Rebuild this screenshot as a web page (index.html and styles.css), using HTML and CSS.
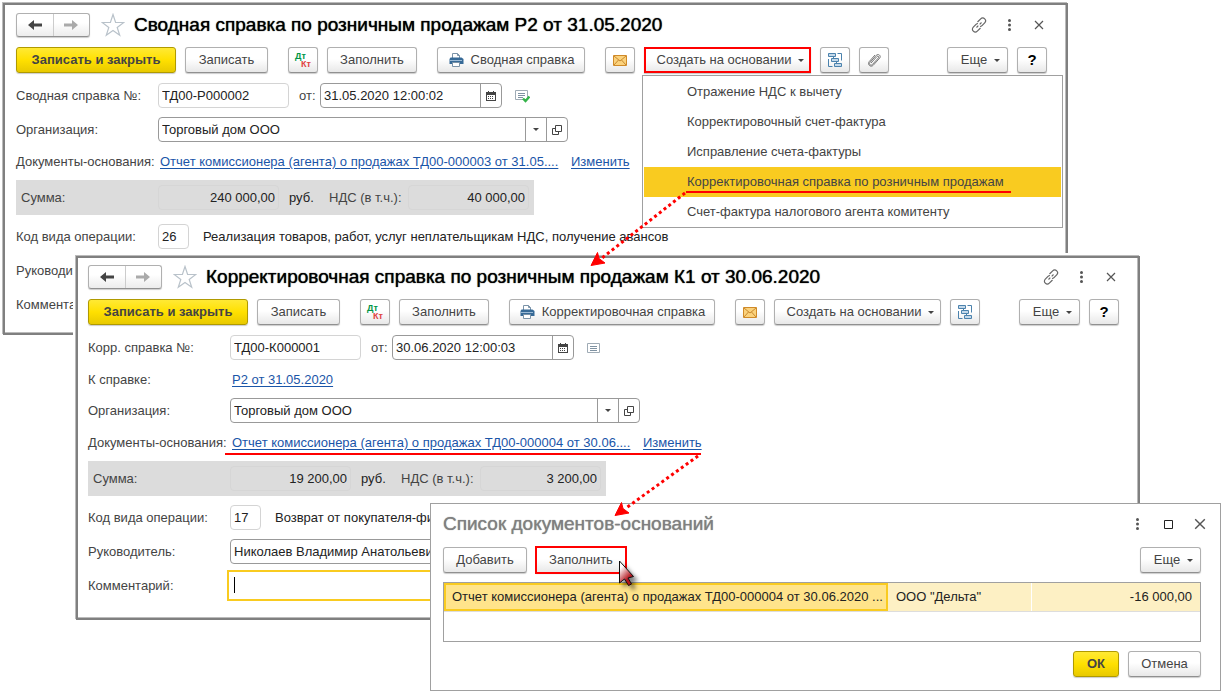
FILE: index.html
```html
<!DOCTYPE html>
<html lang="ru">
<head>
<meta charset="utf-8">
<meta name="viewport" content="width=device-width, initial-scale=1">
<title>Сводная справка по розничным продажам</title>
<link rel="stylesheet" href="styles.css">
</head>
<body>
<svg class="sprite" aria-hidden="true">
  <symbol id="i-back" viewBox="0 0 14 10"><path d="M6 0 0 5l6 5V6.500h8v-3H6z"/></symbol>
  <symbol id="i-forward" viewBox="0 0 14 10"><path d="M8 0l6 5-6 5V6.500H0v-3h8z"/></symbol>
  <symbol id="i-star" viewBox="0 0 24 24"><path d="M12 1.500l2.600 8h8.200l-6.600 4.900 2.500 7.800-6.700-4.800-6.700 4.800 2.500-7.800L1.200 9.500h8.200z" fill="#fff" stroke="#b9c2ca" stroke-width="1.200"/></symbol>
  <symbol id="i-link" viewBox="0 0 16 16"><g fill="none" stroke="#666" stroke-width="1.200"><path d="M6.500 5l3.200-3.200c1.200-1.200 2.800-1.200 4 0s1.200 2.800 0 4L11 8.600c-.6.600-1.300.9-2 .9"/><path d="M9.500 11l-3.200 3.200c-1.200 1.200-2.800 1.200-4 0s-1.200-2.800 0-4L5 7.400c.6-.6 1.300-.9 2-.9"/><path d="M5.500 10.500l1.800-1.800M8.700 7.300l1.800-1.800"/></g></symbol>
  <symbol id="i-dots" viewBox="0 0 3 12"><circle cx="1.500" cy="1.500" r="1.500"/><circle cx="1.500" cy="6" r="1.500"/><circle cx="1.500" cy="10.500" r="1.500"/></symbol>
  <symbol id="i-close" viewBox="0 0 10 10"><path d="M1 1l8 8M9 1l-8 8" fill="none" stroke="#555" stroke-width="1.200"/></symbol>
  <symbol id="i-print" viewBox="0 0 16 16"><path d="M4.500 6V1.500h5l2 2V6" fill="#fff" stroke="#7b93a8"/><path d="M9.500 1.500v2h2" fill="none" stroke="#7b93a8"/><path d="M2.500 5.500h11l2 1.500v5h-14V7z" fill="#376a97"/><path d="M2 8h12v1H2z" fill="#9dbbd6"/><path d="M4.500 10.500h7v4h-7z" fill="#fff" stroke="#7b93a8"/></symbol>
  <symbol id="i-mail" viewBox="0 0 14 11"><path d="M.5.5h13v10H.5z" fill="#fbd27c" stroke="#d08a28"/><path d="M1 1l6 5 6-5M1 10l4.500-5M13 10L8.500 5" fill="none" stroke="#c98a30"/></symbol>
  <symbol id="i-tree" viewBox="0 0 16 16"><g fill="#c4d9ea" stroke="#4b82ad"><path d="M1.500 1.500h7v3h-7zM4.500 6.500h7v3h-7zM7.500 11.500h7v3h-7z"/><path d="M10.500 1.500h4v7M1.500 7v7.500h4M6.500 4.500v2M9.500 9.500v2" fill="none"/></g></symbol>
  <symbol id="i-clip" viewBox="0 0 16 16"><path d="M5 11l6-6.500c1-1 2.400.2 1.500 1.300L6.300 12.600c-1.400 1.500-3.800-.3-2.500-2l6.400-7.200c2-2.200 5.300.3 3.500 2.700L7.200 13.300c-2.600 2.500-6.200-.8-4-3.700L9 3" fill="none" stroke="#777"/></symbol>
  <symbol id="i-calendar" viewBox="0 0 10 10"><path d="M0 1h10v9H0z" fill="#444"/><path d="M2 0h1v2H2zM7 0h1v2H7z" fill="#444"/><path d="M1 4h8v5H1z" fill="#fff"/><path d="M2 5h1v1H2zM4 5h1v1H4zM6 5h1v1H6zM2 7h1v1H2zM4 7h1v1H4zM6 7h1v1H6z" fill="#444"/></symbol>
  <symbol id="i-list" viewBox="0 0 15 12"><path d="M1.500 1.500h12v9h-12z" fill="#fff" stroke="#9fabb5"/><path d="M4 4h7v1H4zM4 6h7v1H4zM4 8h7v1H4z" fill="#7f92a2"/></symbol>
  <symbol id="i-check" viewBox="0 0 16 14"><path d="M1.500 1.500h12v9h-12z" fill="#fff" stroke="#9fabb5"/><path d="M4 4h7v1H4zM4 6h7v1H4zM4 8h5v1H4z" fill="#7f92a2"/><path d="M9 9.500l2.500 2.500L15.500 7.500" fill="none" stroke="#35b34a" stroke-width="2.400"/></symbol>
  <symbol id="i-caret" viewBox="0 0 6 3"><path d="M0 0h6L3 3z"/></symbol>
  <symbol id="i-open" viewBox="0 0 10 10"><path d="M3.500.5h6v6h-6zM3 3.500H.5v6h6V7" fill="none" stroke="#444"/></symbol>
  <symbol id="i-max" viewBox="0 0 9 9"><path d="M.5.5h8v8h-8z" fill="none" stroke="#222"/></symbol>
</svg>

<main class="desktop">
  <section class="window window-summary">
    <header class="window-head">
      <div class="history">
        <button class="history-btn" aria-label="Назад"><svg class="icon-arrow"><use href="#i-back"/></svg></button>
        <button class="history-btn muted" aria-label="Вперед"><svg class="icon-arrow"><use href="#i-forward"/></svg></button>
      </div>
      <button class="star" aria-label="В избранное"><svg><use href="#i-star"/></svg></button>
      <h1 class="title">Сводная справка по розничным продажам Р2 от 31.05.2020</h1>
      <button class="tool" aria-label="Ссылка"><svg class="icon-16"><use href="#i-link"/></svg></button>
      <button class="tool" aria-label="Меню"><svg class="icon-dots"><use href="#i-dots"/></svg></button>
      <button class="tool" aria-label="Закрыть"><svg class="icon-10"><use href="#i-close"/></svg></button>
    </header>
    <div class="toolbar">
      <div class="group">
        <button class="btn primary w-save">Записать и закрыть</button>
        <button class="btn w-write">Записать</button>
      </div>
      <div class="group">
        <button class="btn square dtkt"><span class="debit">Дт</span><span class="credit">Кт</span></button>
        <button class="btn w-fill">Заполнить</button>
      </div>
      <button class="btn w-print"><svg class="icon-16"><use href="#i-print"/></svg>Сводная справка</button>
      <div class="group">
        <button class="btn square" aria-label="Почта"><svg class="icon-mail"><use href="#i-mail"/></svg></button>
        <div class="menu-anchor">
          <button class="btn w-create marked" aria-haspopup="menu">Создать на основании<svg class="icon-caret"><use href="#i-caret"/></svg></button>
          <div class="menu" role="menu">
            <button class="menu-item" role="menuitem">Отражение НДС к вычету</button>
            <button class="menu-item" role="menuitem">Корректировочный счет-фактура</button>
            <button class="menu-item" role="menuitem">Исправление счета-фактуры</button>
            <button class="menu-item current" role="menuitem">Корректировочная справка по розничным продажам</button>
            <button class="menu-item" role="menuitem">Счет-фактура налогового агента комитенту</button>
          </div>
        </div>
        <button class="btn square" aria-label="Структура"><svg class="icon-16"><use href="#i-tree"/></svg></button>
        <button class="btn square" aria-label="Файлы"><svg class="icon-16"><use href="#i-clip"/></svg></button>
      </div>
      <div class="group end">
        <button class="btn w-more">Еще<svg class="icon-caret"><use href="#i-caret"/></svg></button>
        <button class="btn square help">?</button>
      </div>
    </div>
    <div class="form">
      <div class="row">
        <label class="label" for="a-num">Сводная справка №:</label>
        <input class="field soft w-num" id="a-num" value="ТД00-Р000002">
        <label class="from" for="a-date">от:</label>
        <div class="combo w-date"><input id="a-date" value="31.05.2020 12:00:02"><button aria-label="Календарь"><svg class="icon-10"><use href="#i-calendar"/></svg></button></div>
        <svg class="status"><use href="#i-check"/></svg>
      </div>
      <div class="row">
        <label class="label" for="a-org">Организация:</label>
        <div class="combo w-org"><input id="a-org" value="Торговый дом ООО"><button aria-label="Выбрать"><svg class="icon-caret"><use href="#i-caret"/></svg></button><button aria-label="Открыть"><svg class="icon-10"><use href="#i-open"/></svg></button></div>
      </div>
      <div class="row links">
        <span class="label">Документы-основания:</span>
        <a class="doc-link" href="#">Отчет комиссионера (агента) о продажах ТД00-000003 от 31.05....</a>
        <a href="#">Изменить</a>
      </div>
      <div class="totals">
        <label class="label" for="a-sum">Сумма:</label>
        <input class="field amount" id="a-sum" value="240 000,00" readonly>
        <span class="currency">руб.</span>
        <label class="vat" for="a-vat">НДС (в т.ч.):</label>
        <input class="field amount" id="a-vat" value="40 000,00" readonly>
      </div>
      <div class="row">
        <label class="label" for="a-code">Код вида операции:</label>
        <input class="field soft w-code" id="a-code" value="26">
        <span class="hint">Реализация товаров, работ, услуг неплательщикам НДС, получение авансов</span>
      </div>
      <div class="row">
        <label class="label" for="a-head">Руководитель:</label>
        <input class="field w-org" id="a-head">
      </div>
      <div class="row">
        <label class="label" for="a-note">Комментарий:</label>
        <input class="field grow" id="a-note">
      </div>
    </div>
  </section>

  <section class="window window-correction">
    <header class="window-head">
      <div class="history">
        <button class="history-btn" aria-label="Назад"><svg class="icon-arrow"><use href="#i-back"/></svg></button>
        <button class="history-btn muted" aria-label="Вперед"><svg class="icon-arrow"><use href="#i-forward"/></svg></button>
      </div>
      <button class="star" aria-label="В избранное"><svg><use href="#i-star"/></svg></button>
      <h2 class="title">Корректировочная справка по розничным продажам К1 от 30.06.2020</h2>
      <button class="tool" aria-label="Ссылка"><svg class="icon-16"><use href="#i-link"/></svg></button>
      <button class="tool" aria-label="Меню"><svg class="icon-dots"><use href="#i-dots"/></svg></button>
      <button class="tool" aria-label="Закрыть"><svg class="icon-10"><use href="#i-close"/></svg></button>
    </header>
    <div class="toolbar">
      <div class="group">
        <button class="btn primary w-save">Записать и закрыть</button>
        <button class="btn w-write">Записать</button>
      </div>
      <div class="group">
        <button class="btn square dtkt"><span class="debit">Дт</span><span class="credit">Кт</span></button>
        <button class="btn w-fill">Заполнить</button>
      </div>
      <button class="btn w-print-long"><svg class="icon-16"><use href="#i-print"/></svg>Корректировочная справка</button>
      <div class="group">
        <button class="btn square" aria-label="Почта"><svg class="icon-mail"><use href="#i-mail"/></svg></button>
        <button class="btn w-create">Создать на основании<svg class="icon-caret"><use href="#i-caret"/></svg></button>
        <button class="btn square" aria-label="Структура"><svg class="icon-16"><use href="#i-tree"/></svg></button>
      </div>
      <div class="group end">
        <button class="btn w-more">Еще<svg class="icon-caret"><use href="#i-caret"/></svg></button>
        <button class="btn square help">?</button>
      </div>
    </div>
    <div class="form">
      <div class="row">
        <label class="label" for="b-num">Корр. справка №:</label>
        <input class="field soft w-num" id="b-num" value="ТД00-К000001">
        <label class="from" for="b-date">от:</label>
        <div class="combo w-date"><input id="b-date" value="30.06.2020 12:00:03"><button aria-label="Календарь"><svg class="icon-10"><use href="#i-calendar"/></svg></button></div>
        <svg class="status plain"><use href="#i-list"/></svg>
      </div>
      <div class="row links">
        <span class="label">К справке:</span>
        <a href="#">Р2 от 31.05.2020</a>
      </div>
      <div class="row">
        <label class="label" for="b-org">Организация:</label>
        <div class="combo w-org"><input id="b-org" value="Торговый дом ООО"><button aria-label="Выбрать"><svg class="icon-caret"><use href="#i-caret"/></svg></button><button aria-label="Открыть"><svg class="icon-10"><use href="#i-open"/></svg></button></div>
      </div>
      <div class="row links">
        <span class="label">Документы-основания:</span>
        <a class="doc-link" href="#">Отчет комиссионера (агента) о продажах ТД00-000004 от 30.06....</a>
        <a href="#">Изменить</a>
      </div>
      <div class="totals">
        <label class="label" for="b-sum">Сумма:</label>
        <input class="field amount" id="b-sum" value="19 200,00" readonly>
        <span class="currency">руб.</span>
        <label class="vat" for="b-vat">НДС (в т.ч.):</label>
        <input class="field amount" id="b-vat" value="3 200,00" readonly>
      </div>
      <div class="row">
        <label class="label" for="b-code">Код вида операции:</label>
        <input class="field soft w-code" id="b-code" value="17">
        <span class="hint">Возврат от покупателя-физического лица</span>
      </div>
      <div class="row">
        <label class="label" for="b-head">Руководитель:</label>
        <input class="field w-org" id="b-head" value="Николаев Владимир Анатольевич">
      </div>
      <div class="row">
        <label class="label" for="b-note">Комментарий:</label>
        <div class="active-field"><input class="field" id="b-note"></div>
      </div>
    </div>
  </section>

  <section class="dialog" role="dialog" aria-labelledby="d-title">
    <header class="dialog-head">
      <h2 class="title" id="d-title">Список документов-оснований</h2>
      <button class="tool" aria-label="Меню"><svg class="icon-dots"><use href="#i-dots"/></svg></button>
      <button class="tool" aria-label="Развернуть"><svg class="icon-9"><use href="#i-max"/></svg></button>
      <button class="tool" aria-label="Закрыть"><svg class="icon-12"><use href="#i-close"/></svg></button>
    </header>
    <div class="group">
      <button class="btn w-add">Добавить</button>
      <button class="btn w-fill framed">Заполнить</button>
      <button class="btn w-more end">Еще<svg class="icon-caret"><use href="#i-caret"/></svg></button>
    </div>
    <div class="grid-box">
      <table class="grid">
        <tbody>
          <tr>
            <td class="cell-doc">Отчет комиссионера (агента) о продажах ТД00-000004 от 30.06.2020 ...</td>
            <td class="cell-org">ООО "Дельта"</td>
            <td class="cell-sum">-16 000,00</td>
          </tr>
        </tbody>
      </table>
    </div>
    <footer class="group dialog-foot">
      <button class="btn primary w-ok">ОК</button>
      <button class="btn w-cancel">Отмена</button>
    </footer>
  </section>

  <svg class="marks" width="1222" height="692" viewBox="0 0 1222 692" aria-hidden="true">
    <defs>
      <linearGradient id="g-pointer" x1="0" y1="0" x2="0.6" y2="1"><stop offset="0.250" stop-color="#fff"/><stop offset="0.800" stop-color="#b3141c"/></linearGradient>
      <filter id="f-shade" x="-50%" y="-50%" width="220%" height="220%"><feDropShadow dx="4" dy="4" stdDeviation="2" flood-opacity="0.500"/></filter>
    </defs>
    <g stroke="#f00" fill="none">
      <path d="M686 192h325M225 454h476" stroke-width="2"/>
      <path d="M685 193L602 258M698 456L626 508" stroke-width="3" stroke-dasharray="3 3"/>
    </g>
    <path d="M591 265.500l6.500-13 1.500 6 6 4.500zM615 515.500l6.500-13 1.500 6 6 4.500z" fill="#f00" stroke="#f00"/>
    <path d="M619.500 561v22l5-4 4 6.500 3-1.500-3.500-6 5.500-1.500z" fill="url(#g-pointer)" stroke="#111" filter="url(#f-shade)"/>
  </svg>
</main>
</body>
</html>
```
FILE: styles.css
```css
* {
  box-sizing: border-box;
}

body {
  margin: 0;
  background: #fff;
  color: #444;
  font: 13px/16px "Liberation Sans", Arial, sans-serif;
}

button,
input {
  font: inherit;
  color: inherit;
  margin: 0;
}

button {
  padding: 0;
  border: 0;
  background: none;
}

svg {
  display: block;
  flex: none;
}

.sprite {
  position: absolute;
  width: 0;
  height: 0;
}

.desktop {
  position: relative;
  min-height: 100vh;
  overflow: hidden;
}

/* Windows */
.window {
  position: absolute;
  border: 2px solid #808080;
  background: #fff;
  box-shadow: -1px -1px 0 #bbb, inset -1px -1px 0 #bbb, 0 0 0 3px #fff;
}

.window-summary {
  left: 3px;
  right: 154px;
  top: 3px;
  padding: 8px 0 16px 11px;
}

.window-correction {
  left: 76px;
  right: 82px;
  top: 256px;
  padding: 7px 0 20px 10px;
}

.window-head {
  display: flex;
  align-items: center;
  height: 24px;
  margin-bottom: 10px;
  padding-right: 12px;
}

.history {
  display: flex;
  width: 74px;
  height: 24px;
  border: 1px solid #b0b0b0;
  border-bottom-color: #909090;
  border-radius: 3px;
  background: linear-gradient(#fff 40%, #ececec);
  box-shadow: 0 1px 1px #ccc;
}

.history-btn {
  display: grid;
  place-items: center;
  flex: 1;
  fill: #444;
}

.history-btn + .history-btn {
  border-left: 1px solid #ccc;
}

.history-btn.muted {
  fill: #aaa;
}

.star {
  margin: 0 9px 0 11px;
}

.star svg {
  width: 24px;
  height: 24px;
}

.title {
  flex: 1;
  margin: 0;
  color: #000;
  font-size: 19px;
  font-weight: 400;
  line-height: 24px;
  white-space: nowrap;
  text-shadow: 0 0 1px currentColor;
}

.tool {
  display: grid;
  place-items: center;
  width: 30px;
  height: 24px;
  fill: #555;
}

/* Icon sizes */
.icon-arrow { width: 14px; height: 10px; }
.icon-dots { width: 3px; height: 12px; }
.icon-caret { width: 6px; height: 3px; fill: #444; }
.icon-mail { width: 14px; height: 11px; }
.icon-9 { width: 9px; height: 9px; }
.icon-10 { width: 10px; height: 10px; }
.icon-12 { width: 12px; height: 12px; }
.icon-16 { width: 16px; height: 16px; }

/* Buttons */
.toolbar {
  display: flex;
  gap: 20px;
  margin-bottom: 10px;
  padding-right: 19px;
}

.group {
  display: flex;
  gap: 9px;
}

.end {
  margin-left: auto;
}

.btn {
  display: flex;
  align-items: center;
  justify-content: center;
  gap: 7px;
  height: 26px;
  border: 1px solid #b0b0b0;
  border-bottom-color: #909090;
  border-radius: 3px;
  background: linear-gradient(#fff 45%, #e8e8e8);
  box-shadow: 0 1px 1px #ccc;
  white-space: nowrap;
}

.btn.primary {
  border-color: #b09a00;
  background: linear-gradient(#ffe935, #ffe000 50%, #e8c900);
  font-weight: 700;
}

.btn.square { width: 30px; }
.btn.help { color: #000; font-size: 15px; font-weight: 700; }

.btn.dtkt {
  flex-direction: column;
  align-items: stretch;
  gap: 0;
  padding: 0 6px;
  font-size: 9px;
  font-weight: 700;
  line-height: 8px;
}

.debit {
  color: #009646;
  text-align: left;
}

.credit {
  color: #e04343;
  text-align: right;
}

.w-save { width: 160px; }
.w-write { width: 83px; }
.w-fill { width: 90px; }
.w-add { width: 84px; }
.w-print { width: 148px; }
.w-print-long { width: 206px; }
.w-create { width: 167px; }
.w-more { width: 61px; }
.w-ok { width: 46px; }
.w-cancel { width: 73px; }
.w-create, .w-more { padding-left: 6px; }

.marked,
.framed {
  border-radius: 0;
  outline: 2px solid #f00;
}

.marked {
  outline-offset: -2px;
}

.framed {
  outline-offset: -1px;
}

/* Drop-down menu */
.menu-anchor {
  position: relative;
}

.menu {
  position: absolute;
  z-index: 1;
  top: 28px;
  left: -2px;
  width: 421px;
  padding: 1px 1px 0;
  border: 1px solid #a0a0a0;
  background: #fff;
}

.menu-item {
  display: block;
  width: 100%;
  height: 30px;
  padding-left: 43px;
  text-align: left;
}

.menu-item.current {
  background: #f9cb20;
}

/* Form */
.form {
  display: flex;
  flex-direction: column;
  gap: 9px;
  padding-right: 19px;
}

.row {
  display: flex;
  align-items: center;
  height: 25px;
  white-space: nowrap;
}

.row.links {
  height: 20px;
  padding-top: 2px;
}

.label {
  flex: none;
  width: 142px;
}

.field,
.combo {
  height: 25px;
  border: 1px solid #999;
  border-radius: 4px;
  background: #fff;
  color: #222;
}

.field {
  padding: 0 3px;
}

.field.soft {
  border-color: #d4d4d4;
}

.combo {
  display: flex;
  overflow: hidden;
}

.combo input {
  flex: 1;
  min-width: 0;
  padding: 0 3px;
  border: 0;
  background: none;
}

.combo button {
  display: grid;
  place-items: center;
  width: 21px;
  border-left: 1px solid #999;
}

.w-num { width: 131px; }
.w-date { width: 182px; }
.w-org { width: 410px; }
.w-code { width: 31px; }
.grow { flex: 1; }

.from {
  width: 31px;
  padding-left: 10px;
}

.status {
  width: 16px;
  height: 14px;
  margin-left: 12px;
}

.status.plain {
  width: 15px;
  height: 12px;
}

a {
  margin-left: 2px;
  color: #1a55a8;
  text-underline-offset: 2px;
}

.doc-link {
  width: 396px;
  margin-right: 13px;
}

.totals {
  display: flex;
  align-items: center;
  width: 518px;
  height: 35px;
  padding: 0 5px;
  background: #dcdcdc;
}

.totals .label {
  width: 137px;
}

.amount {
  width: 121px;
  border-color: #d6d6d6;
  background: transparent;
  text-align: right;
}

.currency {
  width: 50px;
  padding-left: 10px;
  color: #222;
}

.vat {
  width: 79px;
}

.hint {
  padding-left: 14px;
  color: #222;
}

.active-field {
  position: relative;
  flex: 1;
}

.active-field .field {
  display: block;
  width: 100%;
  border-color: #fff;
  border-radius: 0;
  outline: 2px solid #f9cb20;
  outline-offset: 1px;
}

.active-field::after {
  content: "";
  position: absolute;
  top: 4px;
  left: 4px;
  width: 1px;
  height: 16px;
  background: #000;
}

/* Dialog */
.dialog {
  position: absolute;
  left: 430px;
  right: 1px;
  top: 503px;
  display: flex;
  flex-direction: column;
  gap: 9px;
  padding: 8px 19px 13px 12px;
  border: 1px solid #a0a0a0;
  background: #fff;
}

.dialog-head {
  display: flex;
  height: 26px;
  margin-right: -14px;
}

.dialog .title {
  color: #808080;
}

.dialog .tool {
  width: 31px;
}

.grid-box {
  height: 60px;
  border: 1px solid #a0a0a0;
}

.grid {
  width: 100%;
  border-collapse: separate;
  border-spacing: 0;
  border-bottom: 1px solid #ddd;
  table-layout: fixed;
  color: #222;
}

.grid td {
  height: 28px;
  padding: 0 8px;
  background: #fdf0c4;
  white-space: nowrap;
  overflow: hidden;
}

.grid .cell-doc {
  width: 444px;
  padding: 0 6px;
  border: 2px solid #f9cb20;
  background: #ffe48b;
}

.grid .cell-org {
  width: 144px;
  border-right: 1px solid #fff;
}

.grid .cell-sum {
  text-align: right;
}

.dialog-foot {
  justify-content: flex-end;
}

/* Callouts over the windows */
.marks {
  position: absolute;
  z-index: 5;
  top: 0;
  left: 0;
  pointer-events: none;
}
```
